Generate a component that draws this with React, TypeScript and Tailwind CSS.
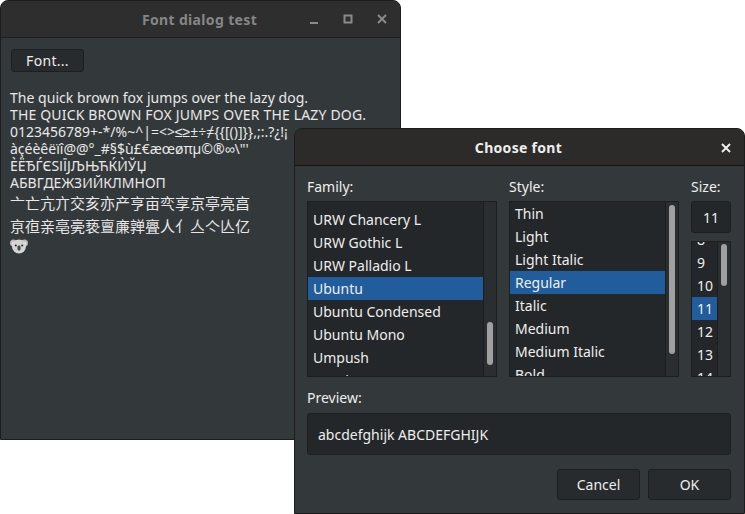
const families = ["URW Chancery L", "URW Gothic L", "URW Palladio L", "Ubuntu", "Ubuntu Condensed", "Ubuntu Mono", "Umpush", "Utopia"]
const styles = ["Thin", "Light", "Light Italic", "Regular", "Italic", "Medium", "Medium Italic", "Bold"]
const sizes = ["8", "9", "10", "11", "12", "13", "14"]

const font = "font-['Noto_Sans','Liberation_Sans','Noto_Sans_CJK_SC',sans-serif]"

function ListBox({
  items,
  selected,
  className,
  listClass,
  rowClass,
  thumbClass,
}: {
  items: string[]
  selected: string
  className: string
  listClass: string
  rowClass: string
  thumbClass: string
}) {
  return (
    <div className={`flex overflow-hidden border border-[#1c1f1f] bg-[#232729] ${className}`}>
      <div className="min-w-0 flex-1 overflow-hidden">
        <div className={listClass}>
          {items.map((item) => (
            <div
              key={item}
              className={`flex h-[23px] items-center whitespace-nowrap ${rowClass} ${item === selected ? "bg-[#215d9c]" : ""}`}
            >
              {item}
            </div>
          ))}
        </div>
      </div>
      <div className="flex w-[13px] shrink-0 flex-col items-center border-l border-[#1c1f1f] bg-[#2a2e30]">
        <div className={`w-[6px] rounded-full bg-[#a0a0a0] ${thumbClass}`} />
      </div>
    </div>
  )
}

function Koala() {
  return (
    <svg width="18" height="16" viewBox="0 0 18 16">
      <circle cx="3.5" cy="5" r="3.5" fill="#b9b9b9" />
      <circle cx="14.5" cy="5" r="3.5" fill="#b9b9b9" />
      <circle cx="3.5" cy="5.5" r="2" fill="#eadfdc" />
      <circle cx="14.5" cy="5.5" r="2" fill="#eadfdc" />
      <ellipse cx="9" cy="8.5" rx="7" ry="7" fill="#d4d4d4" />
      <circle cx="5.8" cy="7.5" r="1" fill="#222" />
      <circle cx="12.2" cy="7.5" r="1" fill="#222" />
      <ellipse cx="9" cy="10" rx="1.7" ry="2.8" fill="#4a4a4a" />
    </svg>
  )
}

export default function App() {
  return (
    <div className={`relative h-[514px] w-[745px] overflow-hidden bg-white text-[15px] text-[#eeeeec] ${font}`}>
      {/* main window */}
      <div className="absolute left-0 top-0 flex h-[440px] w-[401px] flex-col overflow-hidden rounded-t-[8px] border border-[#1c1c1c] bg-[#33393b]">
        <div className="relative flex h-[37px] shrink-0 items-center justify-center border-b border-[#1c1f1f] bg-[#2e2e2e]">
          <span className="-ml-[2px] text-[14px] font-bold tracking-[0.35px] text-[#868686]">Font dialog test</span>
          <div className="absolute right-[11px] top-[11px] flex items-center gap-[20px]">
            <svg width="14" height="14" viewBox="0 0 14 14">
              <rect x="3" y="10" width="8" height="2" fill="#8a8a8a" />
            </svg>
            <svg width="14" height="14" viewBox="0 0 14 14">
              <rect x="3.5" y="3.5" width="7" height="7" fill="none" stroke="#8a8a8a" strokeWidth="2" />
            </svg>
            <svg width="14" height="14" viewBox="0 0 14 14">
              <path d="M3 3l8 8M11 3l-8 8" stroke="#8a8a8a" strokeWidth="2" />
            </svg>
          </div>
        </div>
        <div className="flex flex-col pl-[10px] pt-[11px]">
          <button className="flex h-[23px] w-[73px] items-center justify-center rounded-[3px] border border-[#1c1f1f] bg-[#272b2d] text-[14px] tracking-[0.3px]">
            Font...
          </button>
          <div className="-ml-[1px] mt-[17px] text-[14px] leading-[17px] text-[#e8e8e6]">
            <div className="tracking-[0.03px]">The quick brown fox jumps over the lazy dog.</div>
            <div className="tracking-[0.17px]">THE QUICK BROWN FOX JUMPS OVER THE LAZY DOG.</div>
            <div>{"0123456789+-*/%~^|=<>≤≥±÷≠{{[()]}},;:.?¿!¡"}</div>
            <div>{"àçéèêëïî@@°_#§$ù£€æœøπµ©®∞\\\"'"}</div>
            <div>ЀЁЂЃЄЅІЇЈЉЊЋЌЍЎЏ</div>
            <div>АБВГДЕЖЗИЙКЛМНОП</div>
            <div className="mt-[1px] text-[15px] leading-[23px]">亠亡亢亣交亥亦产亨亩亪享京亭亮亯</div>
            <div className="text-[15px] leading-[23px]">亰亱亲亳亴亵亶亷亸亹人亻亼亽亾亿</div>
            <Koala />
          </div>
        </div>
      </div>

      {/* font dialog */}
      <div className="absolute left-[294px] top-[128px] flex h-[386px] w-[451px] flex-col overflow-hidden rounded-t-[8px] border border-[#1c1c1c] bg-[#33393b]">
        <div className="relative flex h-[37px] shrink-0 items-center justify-center border-b border-[#141414] bg-[#2d2b29]">
          <span className="-ml-[2px] text-[14px] font-bold tracking-[0.3px]">Choose font</span>
          <svg className="absolute right-[11px] top-[12px]" width="14" height="14" viewBox="0 0 14 14">
            <path d="M3 3l8 8M11 3l-8 8" stroke="#eeeeec" strokeWidth="2" />
          </svg>
        </div>
        <div className="flex flex-1 flex-col pl-[12px] pr-[13px] pt-[11px]">
          <div className="flex gap-[12px]">
            <div className="flex w-[190px] flex-col gap-[4px]">
              <span className="text-[14px] leading-[20px]">Family:</span>
              <ListBox
                items={families}
                selected="Ubuntu"
                className="h-[176px]"
                listClass="pt-[6px]"
                rowClass="px-[5px] text-[14px]"
                thumbClass="mt-[120px] h-[43px]"
              />
            </div>
            <div className="flex w-[170px] flex-col gap-[4px]">
              <span className="text-[14px] leading-[20px]">Style:</span>
              <ListBox
                items={styles}
                selected="Regular"
                className="h-[176px]"
                listClass=""
                rowClass="px-[5px] text-[14px]"
                thumbClass="mt-[3px] h-[149px]"
              />
            </div>
            <div className="flex w-[40px] flex-col gap-[4px]">
              <span className="text-[14px] leading-[20px]">Size:</span>
              <div className="flex h-[32px] items-center justify-center rounded-[3px] border border-[#1c1f1f] bg-[#232729] text-[14px]">
                11
              </div>
              <ListBox
                items={sizes}
                selected="11"
                className="mt-[4px] h-[136px]"
                listClass="-mt-[14px]"
                rowClass="pl-[5px] text-[14px]"
                thumbClass="mt-[2px] h-[42px]"
              />
            </div>
          </div>
          <span className="mt-[11px] text-[14px] leading-[20px]">Preview:</span>
          <div className="mt-[5px] flex h-[42px] items-center rounded-[3px] border border-[#1c1f1f] bg-[#232729] px-[10px] text-[14px]">
            abcdefghijk ABCDEFGHIJK
          </div>
          <div className="mt-[14px] flex justify-end gap-[8px]">
            <button className="flex h-[31px] w-[83px] items-center justify-center rounded-[3px] border border-[#1c1f1f] bg-[#272b2d] text-[14px]">
              Cancel
            </button>
            <button className="flex h-[31px] w-[83px] items-center justify-center rounded-[3px] border border-[#1c1f1f] bg-[#272b2d] text-[14px]">
              OK
            </button>
          </div>
        </div>
      </div>
    </div>
  )
}
